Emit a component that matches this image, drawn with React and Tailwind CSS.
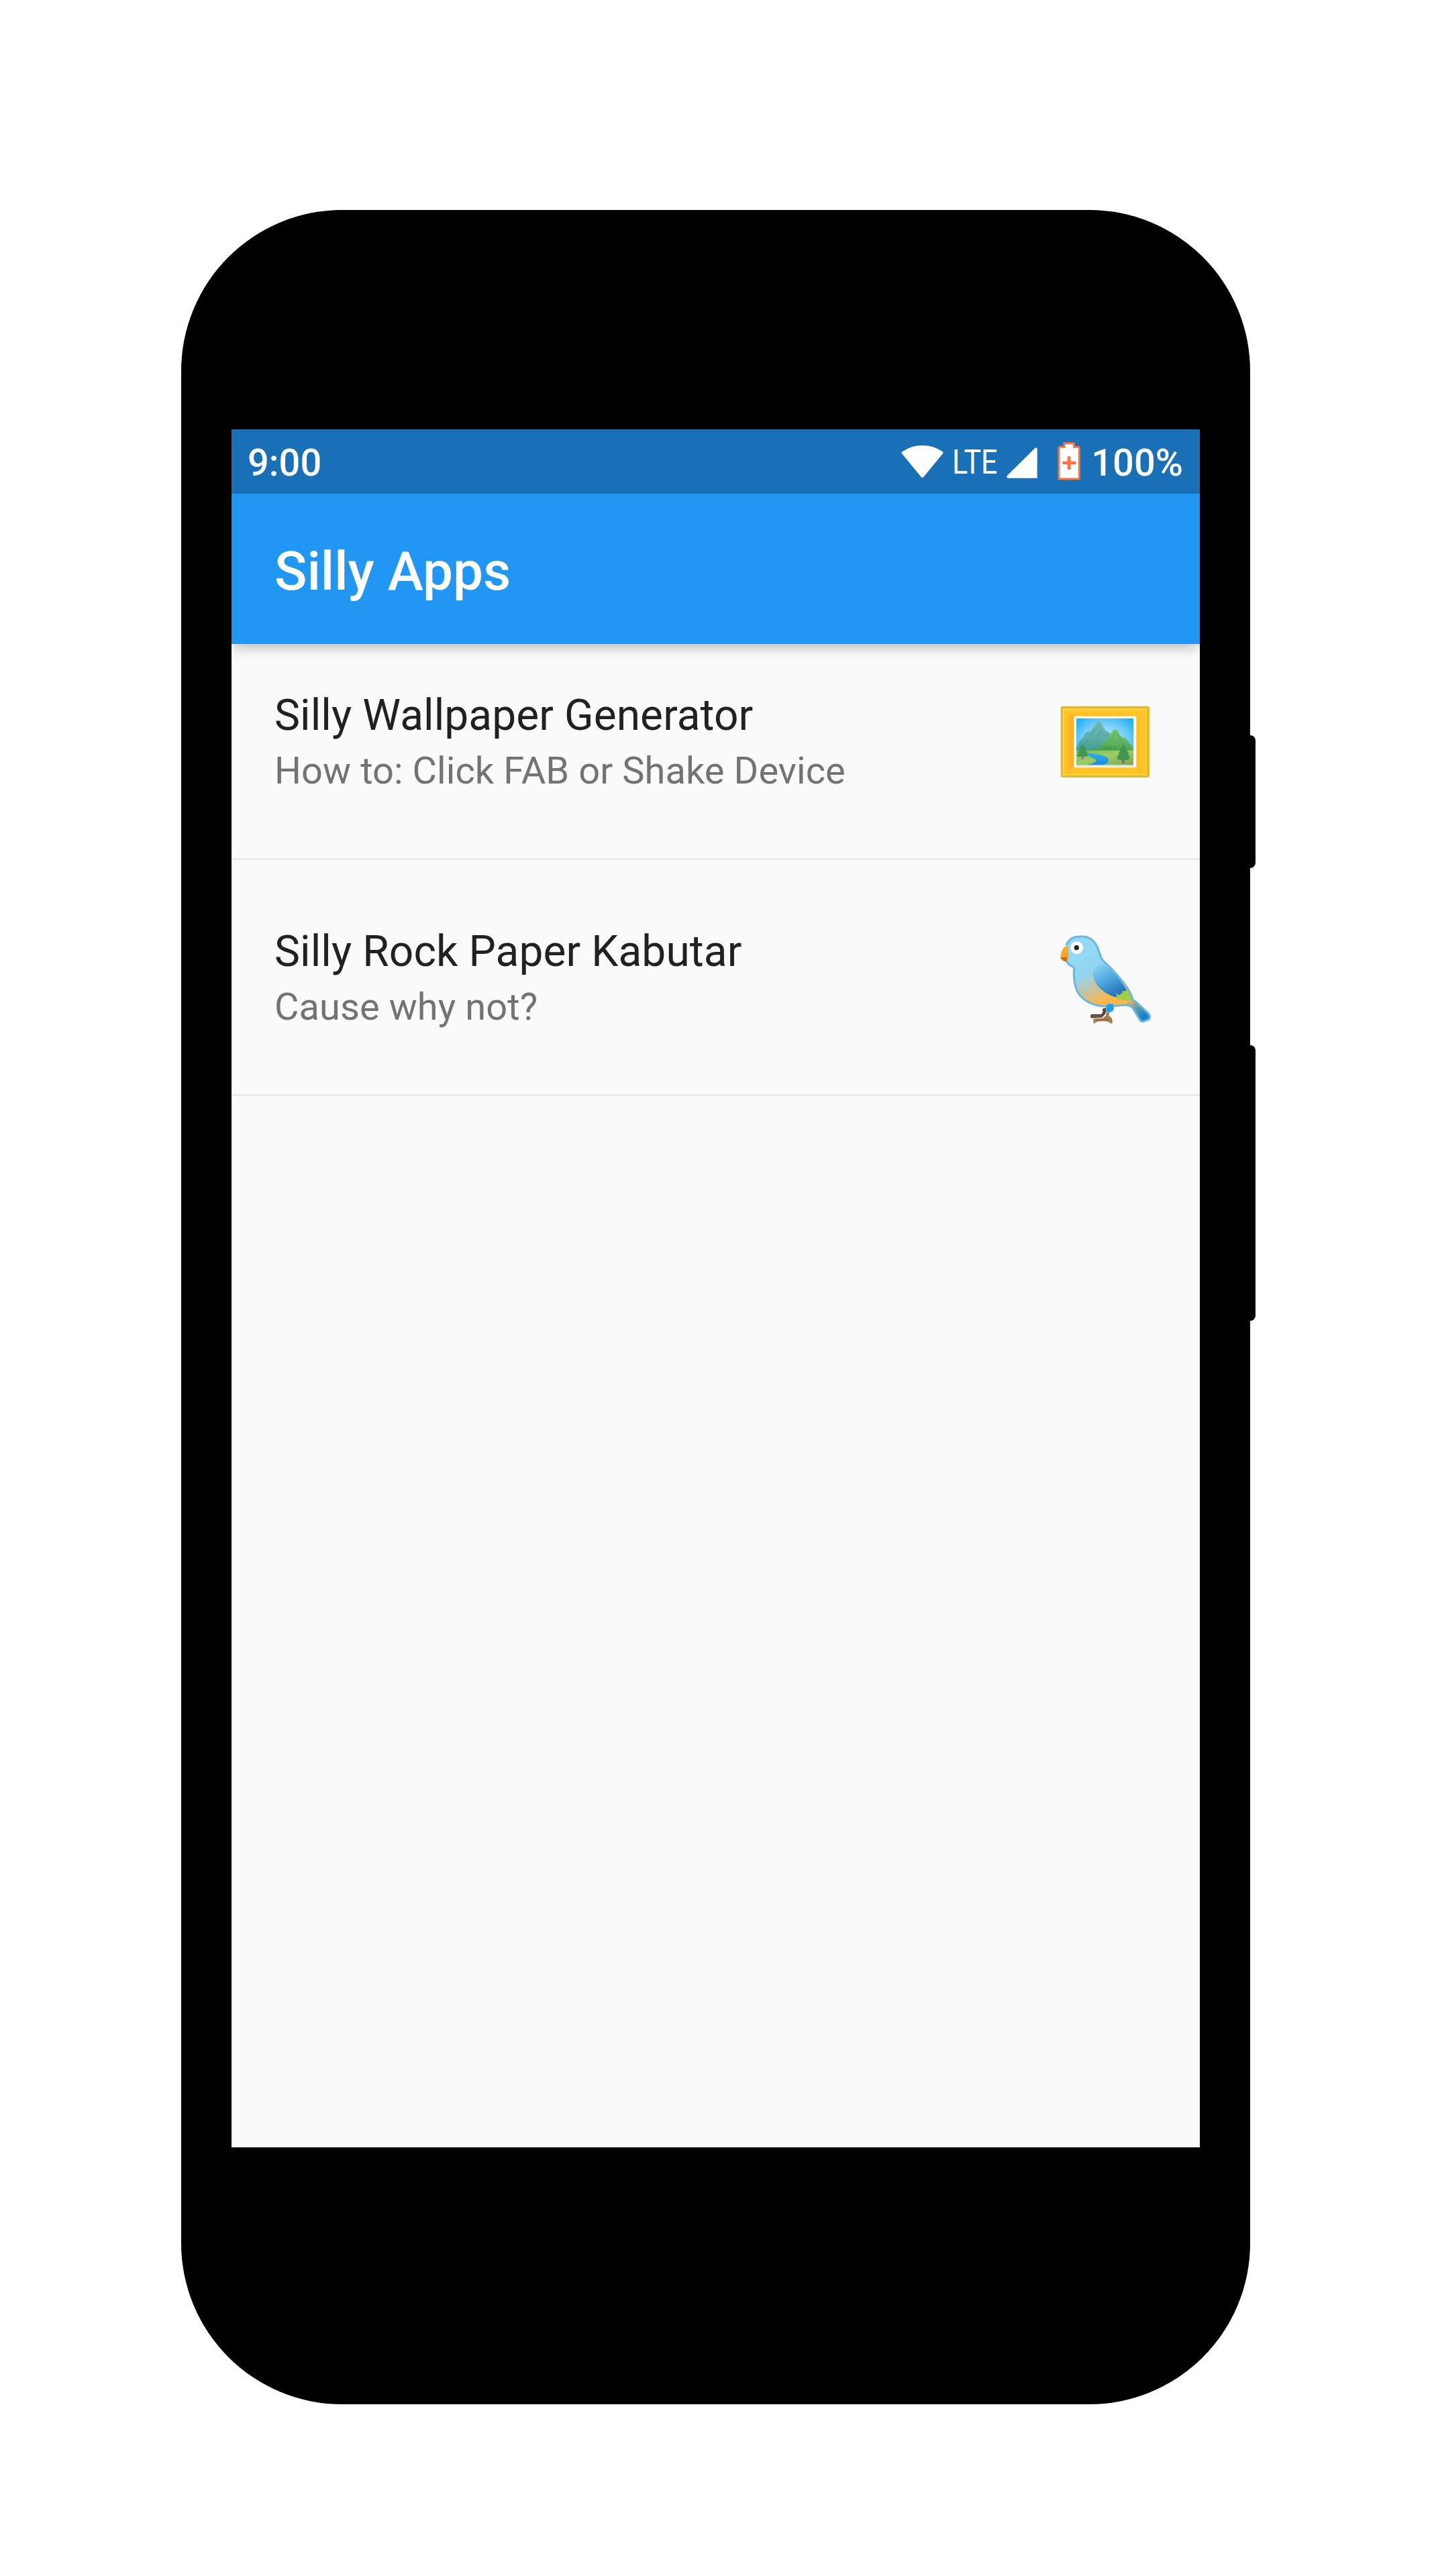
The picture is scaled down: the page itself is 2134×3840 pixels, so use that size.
function WifiIcon() {
  return (
    <svg className="mt-[23px] h-[50px] w-[64px] shrink-0" viewBox="69 96 192 150" fill="#fff">
      <path d="M164 242 Q161 244 158 240 L71 134 Q70 129 74 127 Q113 99 163 99 Q214 99 254 127 Q258 129 256 134 L169 240 Q166 244 162 242Z" />
    </svg>
  );
}

function SignalIcon() {
  return (
    <svg className="mt-[27px] ml-[11px] h-[46px] w-[46px] shrink-0" viewBox="541 109 138 138" fill="#fff">
      <path d="M546 246 Q540 244 543 236 L667 113 Q674 108 678 113 L678 246Z" />
    </svg>
  );
}

function BatteryIcon() {
  return (
    <svg className="mt-[19px] ml-[30px] h-[57px] w-[34px] shrink-0" viewBox="768 87 102 171">
      <path
        d="M798 92 H841 V109 H862 L865 112 V250 L863 252 H776 L774 250 V112 L777 109 H798Z"
        fill="#fff"
        stroke="#ff7043"
        strokeWidth="9"
      />
      <path d="M790 180 H850 M819 151 V210" stroke="#ff7043" strokeWidth="14" />
    </svg>
  );
}

function FramedPictureIcon() {
  return (
    <svg className="mt-2 h-36 w-36 shrink-0" viewBox="48 12 432 432">
      <defs>
        <radialGradient id="sky" cx="0.5" cy="0.5" r="0.65">
          <stop offset="0.3" stopColor="#a8e0ff" />
          <stop offset="0.65" stopColor="#6ccbfa" />
          <stop offset="1" stopColor="#1eb2f5" />
        </radialGradient>
        <linearGradient id="farPeak" x1="0" y1="0" x2="0" y2="1">
          <stop offset="0" stopColor="#75bdb6" />
          <stop offset="0.6" stopColor="#5bada4" />
          <stop offset="1" stopColor="#3f9f8c" />
        </linearGradient>
        <linearGradient id="nearPeak" x1="0" y1="0" x2="0" y2="1">
          <stop offset="0" stopColor="#7ac67c" />
          <stop offset="1" stopColor="#4fa653" />
        </linearGradient>
        <linearGradient id="meadow" x1="0" y1="0" x2="1" y2="1">
          <stop offset="0" stopColor="#7fb857" />
          <stop offset="0.45" stopColor="#9ccc62" />
          <stop offset="1" stopColor="#79a854" />
        </linearGradient>
        <linearGradient id="river" x1="0" y1="0" x2="0" y2="1">
          <stop offset="0" stopColor="#2ab0f3" />
          <stop offset="1" stopColor="#2288dc" />
        </linearGradient>
        <linearGradient id="frameLeft" x1="0" y1="0" x2="1" y2="0">
          <stop offset="0" stopColor="#ffc528" />
          <stop offset="1" stopColor="#ffab1d" />
        </linearGradient>
        <linearGradient id="frameRight" x1="0" y1="0" x2="1" y2="0">
          <stop offset="0" stopColor="#ffbd22" />
          <stop offset="1" stopColor="#ffc829" />
        </linearGradient>
        <linearGradient id="frameTop" x1="0" y1="0" x2="0" y2="1">
          <stop offset="0" stopColor="#ffcb2c" />
          <stop offset="1" stopColor="#ffbd22" />
        </linearGradient>
      </defs>
      <rect x="62" y="68" width="397" height="319" rx="8" fill="#e0b83a" />
      <rect x="71" y="78" width="377" height="299" rx="3" fill="#ffd03b" />
      <path d="M78 85 H442 L400 114 H120Z" fill="url(#frameTop)" />
      <path d="M78 85 L121 114 V342 L78 371Z" fill="url(#frameLeft)" />
      <path d="M442 85 L399 114 V342 L442 371Z" fill="url(#frameRight)" />
      <path d="M78 371 L121 342 H399 L442 371Z" fill="#ffc328" />
      <rect x="120" y="112" width="281" height="231" fill="#ffe3a0" />
      <rect x="123" y="115" width="275" height="225" fill="#fff" />
      <rect x="132" y="123" width="255" height="212" fill="url(#sky)" />
      <path
        d="M132 267 L132 252 L146 226 L160 210 L172 189 L182 182 L194 182 L208 162 L224 139 L232 135 L241 140 L252 162 L264 178 L280 186 L300 215 V267Z"
        fill="url(#farPeak)"
      />
      <path
        d="M232 143 L216 176 L184 218 M235 146 L244 190 L266 205 M208 180 L176 232 M240 180 L220 226"
        stroke="#479e97"
        strokeWidth="5"
        opacity="0.4"
        fill="none"
      />
      <path
        d="M225 267 L246 234 L270 214 L290 184 L300 172 L313 172 L328 200 L340 208 L352 210 L366 229 L380 246 L387 263 V267Z"
        fill="url(#nearPeak)"
      />
      <path d="M309 180 L292 208 L262 238 M313 182 L324 215 L344 226" stroke="#55a95c" strokeWidth="5" opacity="0.5" fill="none" />
      <path
        d="M192 268 L200 256 L206 264 L214 252 L222 264 L228 255 L234 262 L242 242 L250 260 L258 240 L266 256 L274 238 L282 256 L290 242 L298 258 L307 244 L316 268Z"
        fill="#459b50"
        opacity="0.85"
      />
      <rect x="132" y="266" width="255" height="66" fill="url(#meadow)" />
      <path
        d="M180 277 C204 282 232 282 256 291 C286 302 277 320 257 331 L172 331 C196 326 223 320 221 311 C219 301 196 299 186 288Z"
        fill="url(#river)"
      />
      <rect x="156" y="290" width="8" height="16" fill="#8d6e63" />
      <path
        d="M160 238 L172 258 L176 260 L174 267 L182 274 L178 279 L186 287 L180 293 H141 L134 288 L142 279 L139 274 L147 267 L144 260Z"
        fill="#3f9750"
      />
      <rect x="336" y="302" width="12" height="22" fill="#8d6e63" />
      <path
        d="M341 238 L354 258 L362 263 L358 270 L367 278 L363 285 L372 294 L368 300 L371 305 L350 309 H331 L313 305 L318 298 L312 294 L324 284 L319 278 L328 270 L322 263 L332 256Z"
        fill="#3f9750"
      />
      <rect x="132" y="330" width="255" height="5" fill="#cfe0c6" />
    </svg>
  );
}

function BirdIcon() {
  return (
    <svg className="mt-2 h-36 w-36 shrink-0" viewBox="48 48 432 432">
      <defs>
        <linearGradient id="plumage" gradientUnits="userSpaceOnUse" x1="150" y1="175" x2="262" y2="385">
          <stop offset="0" stopColor="#94d8f6" />
          <stop offset="0.3" stopColor="#92d5f3" />
          <stop offset="0.64" stopColor="#c9c39a" />
          <stop offset="0.92" stopColor="#ffb64a" />
        </linearGradient>
        <linearGradient id="wing" gradientUnits="userSpaceOnUse" x1="232" y1="205" x2="310" y2="345">
          <stop offset="0" stopColor="#83cff6" />
          <stop offset="0.5" stopColor="#4fa5dc" />
          <stop offset="1" stopColor="#1d70b5" />
        </linearGradient>
        <linearGradient id="tail" gradientUnits="userSpaceOnUse" x1="370" y1="370" x2="425" y2="435">
          <stop offset="0" stopColor="#e0b06a" />
          <stop offset="0.45" stopColor="#66a0a4" />
          <stop offset="1" stopColor="#1a88cb" />
        </linearGradient>
        <linearGradient id="beak" x1="0" y1="0" x2="1" y2="1">
          <stop offset="0" stopColor="#f39c1c" />
          <stop offset="0.5" stopColor="#ffa928" />
          <stop offset="1" stopColor="#e98211" />
        </linearGradient>
      </defs>
      <path d="M265 396 L248 402 L251 414 L244 426 L197 426 L195 440 L205 443 L246 441 L260 426 L266 412Z" fill="#5f4138" />
      <path d="M202 434 L244 434" stroke="#806158" strokeWidth="5" />
      <path d="M266 415 L280 416 L277 432 L291 444 L294 464 L285 468 L279 461 Q250 453 218 461 L215 468 L208 465 L209 446 L250 444 L264 432Z" fill="#a47c52" />
      <path d="M220 452 Q250 446 278 452" stroke="#8a6440" strokeWidth="4" fill="none" />
      <path
        d="M87 118 C100 82 126 78 155 78 C192 78 214 96 227 129 C238 157 241 178 257 192 C291 220 320 257 344 286 C366 314 379 334 384 360 L408 379 L451 419 Q466 434 458 448 L433 458 Q421 460 415 449 L384 398 Q372 386 350 384 C312 389 276 391 244 389 C193 383 153 357 136 323 C121 292 119 254 122 216 C101 209 89 199 86 180Z"
        fill="url(#plumage)"
      />
      <path d="M366 362 L384 362 L408 379 L451 419 Q466 434 458 448 L433 458 Q421 460 415 449 L384 398 Q374 386 350 384Z" fill="url(#tail)" />
      <path d="M428 424 L450 436 L445 449 L429 454 L419 442Z" fill="#1785c8" />
      <path d="M303 343 L359 311 C374 327 380 344 382 363 C356 366 329 364 303 350Z" fill="#a3cc4a" />
      <path
        d="M256 206 C232 202 211 215 207 239 C205 276 226 300 251 321 C269 335 287 344 306 349 L314 344 L308 330 L321 339 L330 337 L333 329 L338 333 L337 321 L350 323 L356 315 C333 280 306 239 267 211Z"
        fill="url(#wing)"
      />
      <path
        d="M87 118 C100 82 126 78 155 78 C192 78 214 96 227 129 C238 157 241 178 257 192 C291 220 320 257 344 286 C366 314 379 334 384 360 L408 379 L451 419 Q466 434 458 448 L433 458 Q421 460 415 449 L384 398 Q372 386 350 384 C312 389 276 391 244 389 C193 383 153 357 136 323 C121 292 119 254 122 216 C101 209 89 199 86 180"
        fill="none"
        stroke="#6db6e1"
        strokeWidth="9"
        strokeLinejoin="round"
      />
      <path d="M269 381 Q281 376 298 381 L298 405 Q288 419 268 417 L265 402Z" fill="#259ddd" stroke="#5db5e6" strokeWidth="4" />
      <path d="M94 122 C76 119 63 142 61 173 Q63 185 86 191 L94 178 Q99 150 94 122Z" fill="url(#beak)" />
      <path d="M62 172 Q75 168 91 174 L86 190 Q66 185 62 172Z" fill="#c86e0c" />
      <circle cx="134" cy="128" r="28.500" fill="#fff" />
      <circle cx="133" cy="128" r="11" fill="#212121" />
    </svg>
  );
}

function StatusBar() {
  return (
    <div className="flex h-24 items-start bg-[#1a70b7] pl-[24px] pr-[25px] text-[56px] leading-[96px] font-medium text-white">
      <span className="mt-[2px] grow">9:00</span>
      <WifiIcon />
      <span className="mt-[-1px] ml-[12px] w-[70px] shrink-0">
        <span className="inline-block origin-left scale-x-[0.86] text-[50px] font-normal">LTE</span>
      </span>
      <SignalIcon />
      <BatteryIcon />
      <span className="mt-[2px] ml-[16px]">100%</span>
    </div>
  );
}

function ListItem({ title, subtitle, icon, className }) {
  return (
    <li className={`flex items-start justify-between border-b-[3px] border-[#e9e9e9] pr-[68px] pl-16 ${className}`}>
      <div>
        <h2 className="mt-px text-[64px] leading-[80px] tracking-[0.08px] text-[#212121]">{title}</h2>
        <p className="mt-[2px] text-[56px] leading-[80px] tracking-[0.07px] text-[#737373]">{subtitle}</p>
      </div>
      {icon}
    </li>
  );
}

export default function App() {
  return (
    <div className="h-[3840px] w-[2134px] bg-white pt-[313px] pl-[270px] font-[Roboto,sans-serif]">
      <div className="relative h-[3271px] w-[1593px] rounded-[240px] bg-black px-[75px] pt-[327px]">
        <div className="absolute top-[783px] -right-2 h-[198px] w-10 rounded-r-lg bg-black" />
        <div className="absolute top-[1245px] -right-2 h-[411px] w-10 rounded-r-lg bg-black" />
        <div className="h-[2561px] overflow-hidden bg-[#fafafa]">
          <StatusBar />
          <header className="flex h-56 items-center bg-[#2196f3] px-16 pt-[7px] shadow-[0_8px_16px_-4px_rgba(0,0,0,0.18),0_10px_20px_rgba(0,0,0,0.07)]">
            <h1 className="text-[80px] leading-none font-medium text-white">Silly Apps</h1>
          </header>
          <ul>
            <ListItem
              className="h-[322px] pt-[66px]"
              title="Silly Wallpaper Generator"
              subtitle="How to: Click FAB or Shake Device"
              icon={<FramedPictureIcon />}
            />
            <ListItem
              className="h-[352px] pt-[96px]"
              title="Silly Rock Paper Kabutar"
              subtitle="Cause why not?"
              icon={<BirdIcon />}
            />
          </ul>
        </div>
      </div>
    </div>
  );
}
